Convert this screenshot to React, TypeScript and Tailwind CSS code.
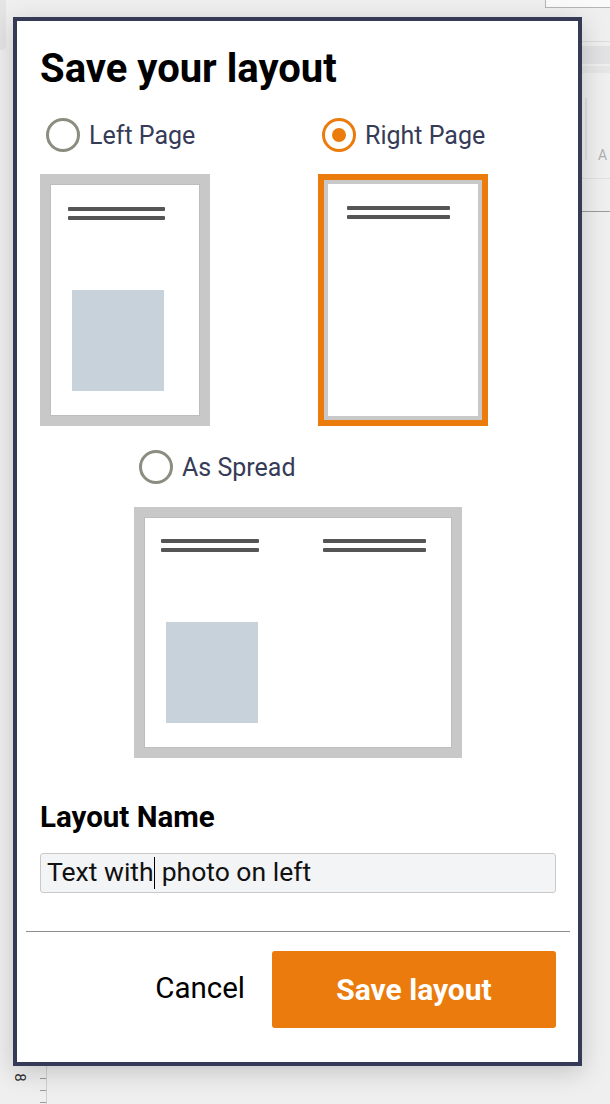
import React from "react";

const font = { fontFamily: "Roboto, 'Liberation Sans', sans-serif" };

function Lines({ w }: { w: number }) {
  return (
    <div className="flex flex-col gap-[5px]" style={{ width: w }}>
      <div className="h-[4px] bg-[#555555] rounded-[1px]" />
      <div className="h-[4px] bg-[#555555] rounded-[1px]" />
    </div>
  );
}

function Photo() {
  return <div className="w-[92px] h-[101px] bg-[#c8d2db]" />;
}

function Radio({ checked, label }: { checked?: boolean; label: string }) {
  return (
    <div className="flex items-center gap-[9px]">
      <div
        className={
          checked
            ? "w-[34px] h-[34px] rounded-full border-[3px] border-[#eb7b0c] flex items-center justify-center"
            : "w-[34px] h-[34px] rounded-full border-[3px] border-[#8c8c80]"
        }
      >
        {checked && <div className="w-[14px] h-[14px] rounded-full bg-[#eb7b0c]" />}
      </div>
      <span className="text-[25px] leading-none text-[#363b57]">{label}</span>
    </div>
  );
}

export default function App() {
  return (
    <div className="relative h-[1104px] w-[610px] overflow-hidden bg-[#efefef]" style={font}>
      {/* app behind the dialog */}
      <div className="absolute left-0 top-0 w-[6px] h-[50px] bg-[#e4e4e4] rounded-br-[4px]" />
      <div className="absolute left-[545px] -top-[2px] w-[80px] h-[10px] border border-[#b5b5b5] bg-[#fafafa]" />
      <div className="absolute left-[560px] top-[41px] w-[60px] h-[1px] bg-[#dcdcdc]" />
      <div className="absolute left-[560px] top-[46px] w-[60px] h-[18px] bg-[#e2e2e4]" />
      <div className="absolute left-[560px] top-[66px] w-[60px] h-[7px] bg-[#e6e6e6]" />
      <div className="absolute left-[585px] top-[98px] w-[2px] h-[62px] bg-[#dedede]" />
      <div className="absolute left-[598px] top-[148px] text-[14px] leading-none text-[#b0b0b0]">A</div>
      <div className="absolute left-[560px] top-[178px] w-[60px] h-[1px] bg-[#e0e0e0]" />
      <div className="absolute left-[560px] top-[211px] w-[60px] h-[1px] bg-[#9a9a9a]" />
      <div className="absolute left-[46px] top-[1060px] w-[1px] h-[50px] bg-[#cfcfcf]" />
      <div className="absolute left-[40px] top-[1078px] w-[6px] h-[1px] bg-[#9a9a9a]" />
      <div className="absolute left-[40px] top-[1090px] w-[6px] h-[1px] bg-[#9a9a9a]" />
      <div className="absolute left-[40px] top-[1102px] w-[6px] h-[1px] bg-[#9a9a9a]" />
      <div className="absolute left-[15px] top-[1070px] text-[15px] leading-none text-[#333] rotate-90">8</div>

      {/* dialog */}
      <div className="absolute left-[13px] top-[17px] w-[569px] h-[1049px] border-4 border-[#353b56] bg-white shadow-[0_6px_24px_rgba(0,0,0,0.18)] flex flex-col">
        <h1 className="ml-[23px] mt-[28px] text-[40px] leading-none font-bold text-black">
          Save your layout
        </h1>

        <div className="mt-[29px] ml-[23px] flex gap-[108px]">
          <div className="w-[170px] flex flex-col">
            <div className="ml-[6px]">
              <Radio label="Left Page" />
            </div>
            <div className="mt-[22px] w-[170px] h-[252px] border-[10px] border-[#c8c8c8] bg-white">
              <div className="h-full w-full border border-[#bdbdbd] pt-[22px] pl-[17px]">
                <Lines w={97} />
                <div className="mt-[70px] ml-[4px]">
                  <Photo />
                </div>
              </div>
            </div>
          </div>
          <div className="w-[170px] flex flex-col">
            <div className="ml-[4px]">
              <Radio checked label="Right Page" />
            </div>
            <div className="mt-[22px] w-[170px] h-[252px] border-[6px] border-[#eb7b0c] bg-white">
              <div className="h-full w-full border-4 border-[#c8c8c8]">
                <div className="h-full w-full pt-[22px] pl-[19px]">
                  <Lines w={103} />
                </div>
              </div>
            </div>
          </div>
        </div>

        <div className="mt-[24px] ml-[117px] flex flex-col">
          <div className="ml-[5px]">
            <Radio label="As Spread" />
          </div>
          <div className="mt-[23px] w-[328px] h-[251px] border-[10px] border-[#c8c8c8] bg-white">
            <div className="h-full w-full border border-[#bdbdbd] pt-[21px] pl-[16px] flex">
              <div className="flex flex-col">
                <Lines w={98} />
                <div className="mt-[70px] ml-[5px]">
                  <Photo />
                </div>
              </div>
              <div className="ml-[64px]">
                <Lines w={103} />
              </div>
            </div>
          </div>
        </div>

        <label className="ml-[23px] mt-[45px] text-[29.5px] leading-none font-bold text-black">
          Layout Name
        </label>
        <div className="ml-[23px] mt-[20px] w-[516px] h-[40px] rounded-[3px] border border-[#c9c9c9] bg-[#f3f4f6] flex items-center pl-[6px]">
          <span className="text-[26.5px] leading-none text-[#111]">Text with</span>
          <span className="w-[1.5px] h-[32px] bg-black" />
          <span className="text-[26.5px] leading-none text-[#111]">&nbsp;photo on left</span>
        </div>

        <div className="mt-[38px] ml-[9px] mr-[8px] h-[1px] bg-[#8d8d8d]" />

        <div className="mt-[19px] flex items-center justify-end mr-[22px] gap-[27px]">
          <button className="text-[29.5px] leading-none text-black">Cancel</button>
          <button className="w-[284px] h-[77px] rounded-[3px] bg-[#eb7b0c] text-white text-[30px] font-bold">
            Save layout
          </button>
        </div>
      </div>
    </div>
  );
}
